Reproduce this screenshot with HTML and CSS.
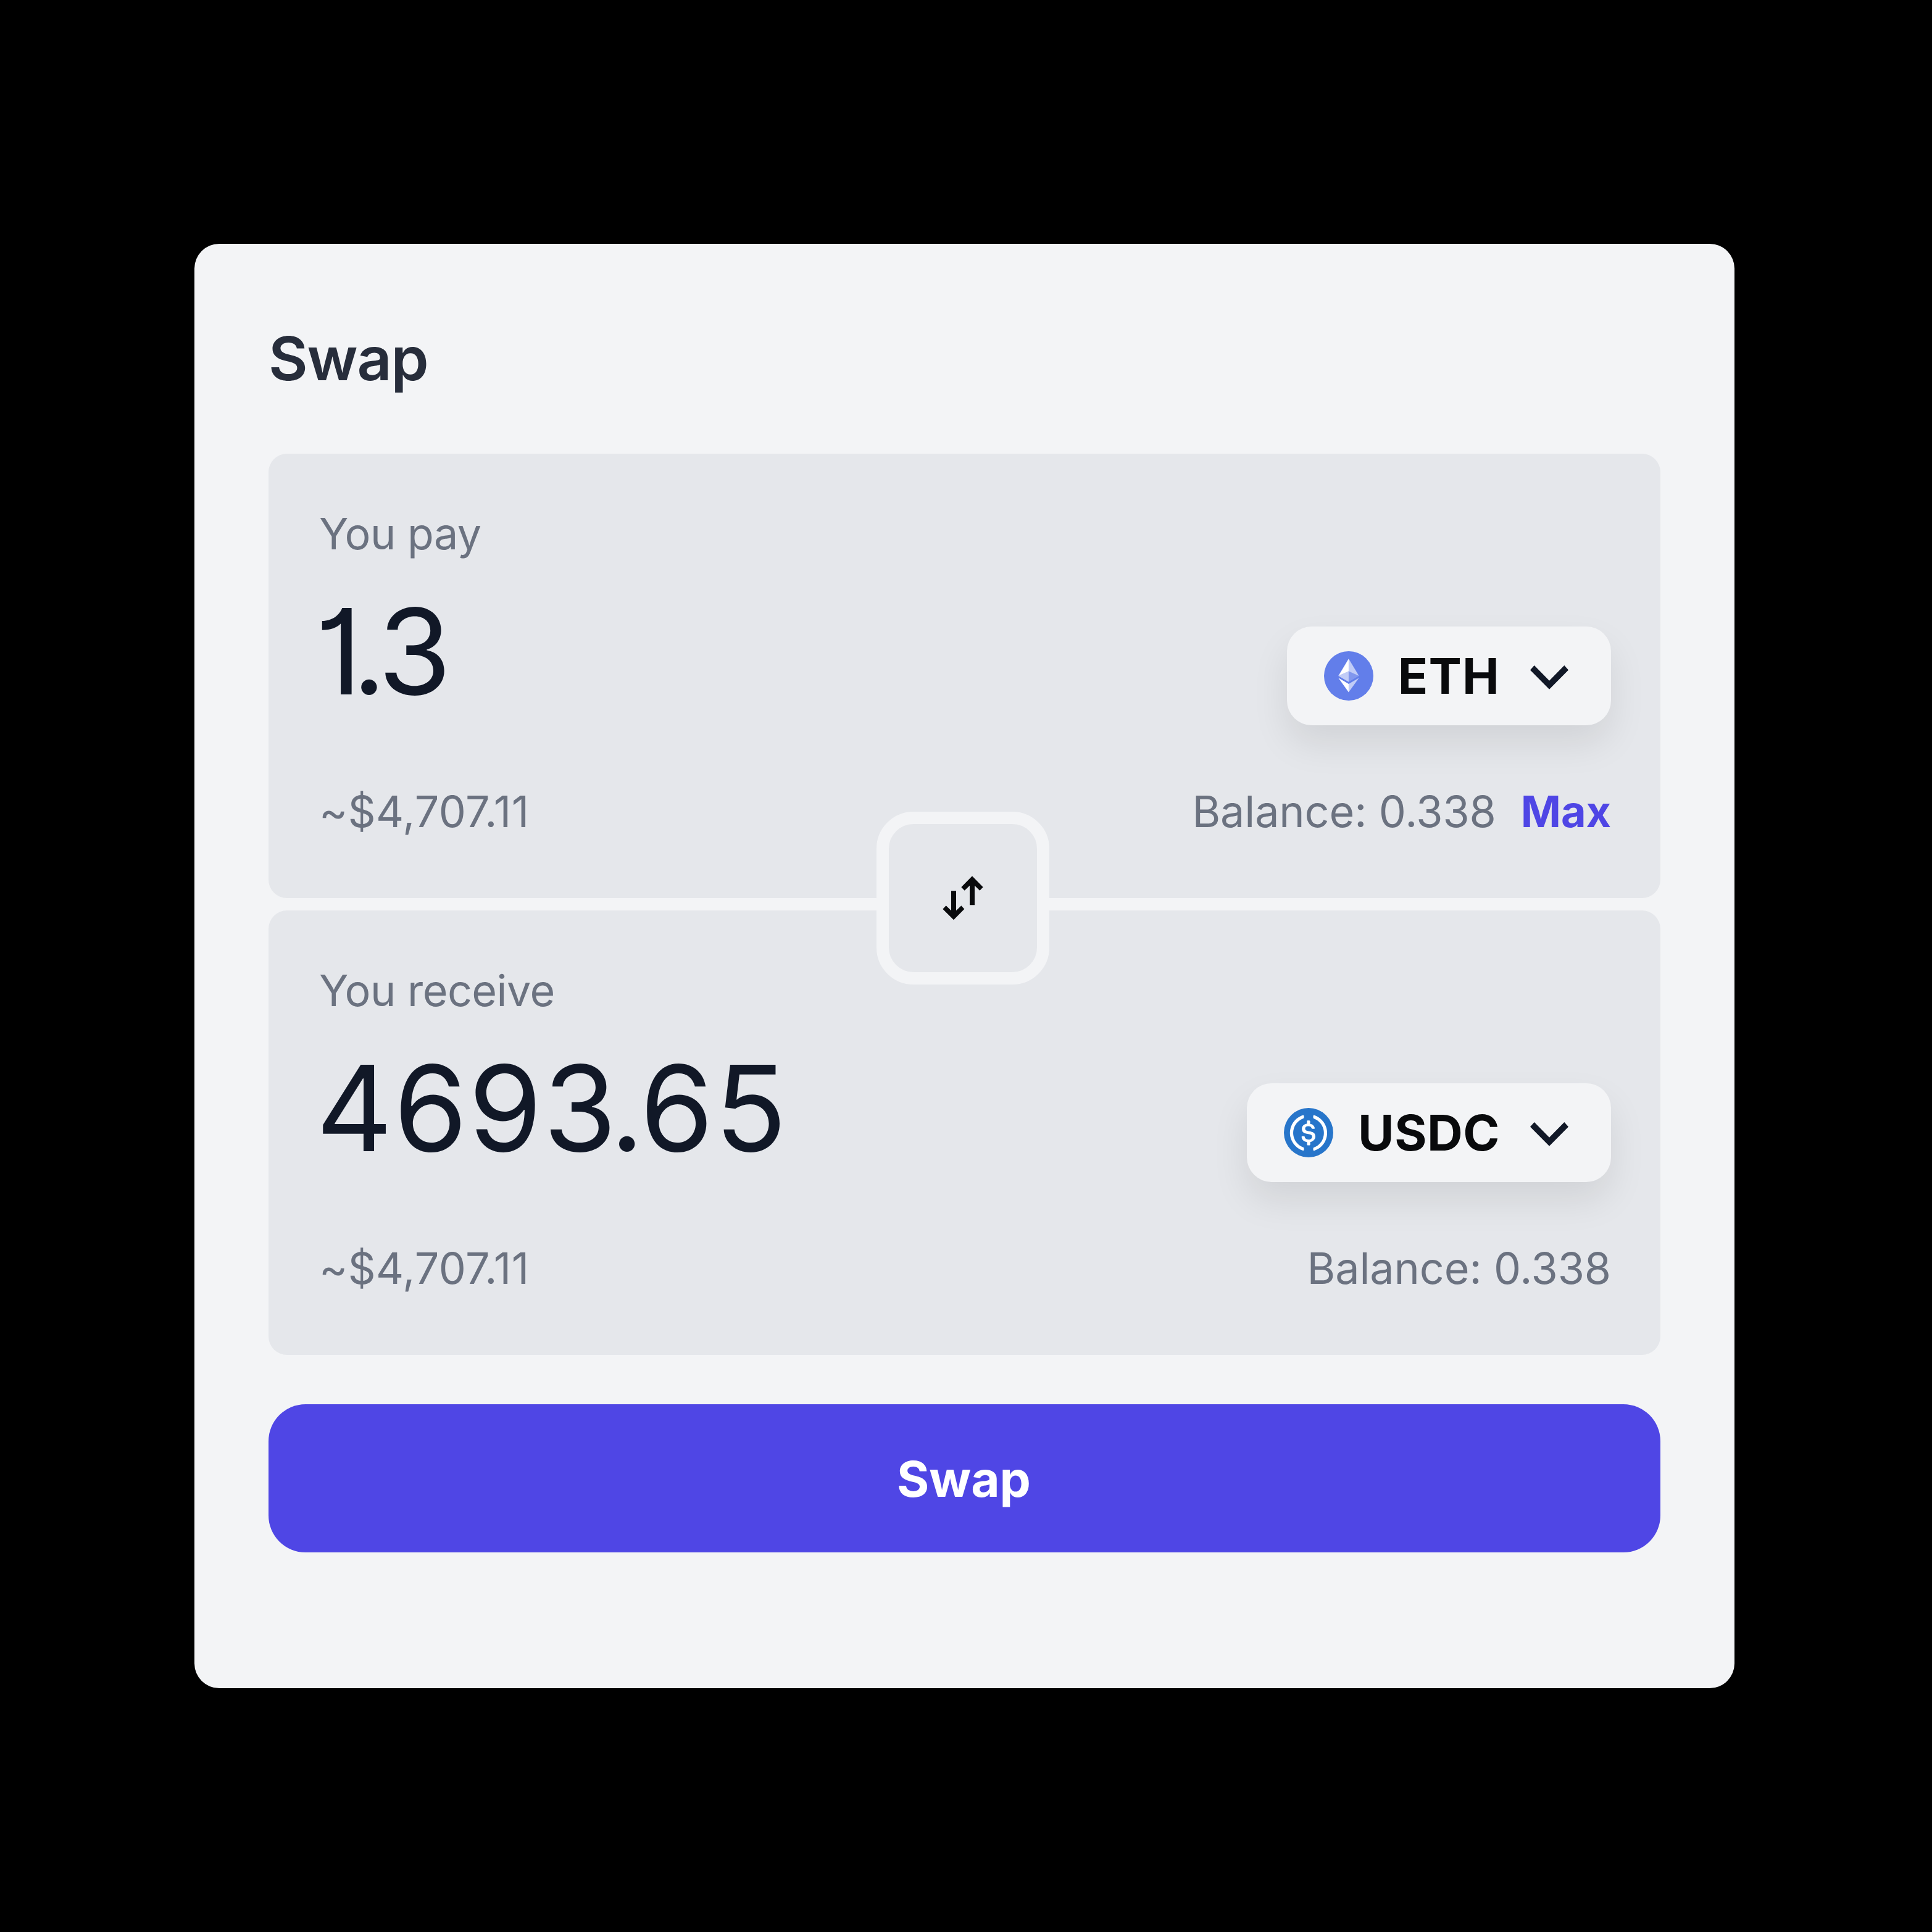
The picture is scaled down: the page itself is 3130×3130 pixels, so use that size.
FILE: index.html
```html
<!DOCTYPE html>
<html lang="en">
<head>
<meta charset="utf-8">
<title>Swap</title>
<link rel="stylesheet" href="styles.css">
</head>
<body>
<main class="card">
  <h1 class="title">Swap</h1>
  <div class="panels">
    <section class="panel">
      <div class="label">You pay</div>
      <div class="main-row">
        <div class="amount amount-short">1.3</div>
        <button class="token token-eth">
          <svg class="icon" viewBox="0 0 32 32">
            <circle cx="16" cy="16" r="16" fill="#627eea"/>
            <g fill="#fff" transform="translate(1.3 1.31) scale(.89 .905)">
              <path fill-opacity=".602" d="M16.498 4v8.87l7.497 3.35z"/>
              <path d="M16.498 4L9 16.22l7.498-3.35z"/>
              <path fill-opacity=".602" d="M16.498 21.968v6.027L24 17.616z"/>
              <path d="M16.498 27.995v-6.028L9 17.616z"/>
              <path fill-opacity=".2" d="M16.498 20.573l7.497-4.353-7.497-3.348z"/>
              <path fill-opacity=".602" d="M9 16.22l7.498 4.353v-7.701z"/>
            </g>
          </svg>
          <span class="symbol">ETH</span>
          <svg class="icon" viewBox="0 0 80 80"><path fill="#111827" d="M9 30.5L15.7 23 40 47.7 64.3 23 71 30.5 40 61.7z"/></svg>
        </button>
      </div>
      <div class="foot-row">
        <span class="fiat">~$4,707.11</span>
        <span class="balance">Balance: 0.338<a class="max">Max</a></span>
      </div>
    </section>
    <section class="panel">
      <div class="label">You receive</div>
      <div class="main-row">
        <div class="amount">469<span class="point">3.</span>65</div>
        <button class="token">
          <svg class="icon" viewBox="0 0 2000 2000">
            <circle cx="1000" cy="1000" r="1000" fill="#2775ca"/>
            <path fill="#fff" d="M1275 1158.33c0-145.83-87.5-195.83-262.5-216.66-125-16.67-150-50-150-108.34s41.67-95.83 125-95.83c75 0 116.67 25 137.5 87.5 4.17 12.5 16.67 20.83 29.17 20.83h66.66c16.67 0 29.17-12.5 29.17-29.16v-4.17c-16.67-91.67-91.67-162.5-187.5-170.83v-100c0-16.67-12.5-29.17-33.33-33.34h-62.5c-16.67 0-29.17 12.5-33.34 33.34v95.83c-125 16.67-204.16 100-204.16 204.17 0 137.5 83.33 191.66 258.33 212.5 116.67 20.83 154.17 45.83 154.17 112.5s-58.34 112.5-137.5 112.5c-108.34 0-145.84-45.84-158.34-108.34-4.16-16.66-16.66-25-29.16-25h-70.84c-16.66 0-29.16 12.5-29.16 29.17v4.17c16.66 104.16 83.33 179.16 220.83 200v100c0 16.66 12.5 29.16 33.33 33.33h62.5c16.67 0 29.17-12.5 33.34-33.33v-100c125-20.84 208.33-108.34 208.33-220.84z"/>
            <path fill="#fff" d="M787.5 1595.83c-325-116.66-491.67-479.16-370.83-800 62.5-175 200-308.33 370.83-370.83 16.67-8.33 25-20.83 25-41.67V325c0-16.67-8.33-29.17-25-33.33-4.17 0-12.5 0-16.67 4.16-395.83 125-612.5 545.84-487.5 941.67 75 233.33 254.17 412.5 487.5 487.5 16.67 8.33 33.34 0 37.5-16.67 4.17-4.16 4.17-8.33 4.17-16.66v-58.34c0-12.5-12.5-29.16-25-37.5zM1229.17 295.83c-16.67-8.33-33.34 0-37.5 16.67-4.17 4.17-4.17 8.33-4.17 16.67v58.33c0 16.67 12.5 33.33 25 41.67 325 116.66 491.67 479.16 370.83 800-62.5 175-200 308.33-370.83 370.83-16.67 8.33-25 20.83-25 41.67V1700c0 16.67 8.33 29.17 25 33.33 4.17 0 12.5 0 16.67-4.16 395.83-125 612.5-545.84 487.5-941.67-75-237.5-258.34-416.67-487.5-491.67z"/>
          </svg>
          <span class="symbol">USDC</span>
          <svg class="icon" viewBox="0 0 80 80"><path fill="#111827" d="M9 30.5L15.7 23 40 47.7 64.3 23 71 30.5 40 61.7z"/></svg>
        </button>
      </div>
      <div class="foot-row">
        <span class="fiat">~$4,707.11</span>
        <span class="balance">Balance: 0.338</span>
      </div>
    </section>
    <button class="flip" aria-label="Switch tokens">
      <svg class="icon" viewBox="0 0 240 240" fill="#090a0c">
        <path d="M63 85H87V181L112 157 127 173 75 226 22 173 38 157 63 181z"/>
        <path d="M165 13L218 67 202 83 177 59V154H153V59L128 83 112 67z"/>
      </svg>
    </button>
  </div>
  <button class="submit">Swap</button>
</main>
</body>
</html>
```

FILE: styles.css
```css
* {
  box-sizing: border-box;
}

body {
  margin: 0;
  height: 3130px;
  padding: 395px 0 0 315px;
  background: #000;
  font-family: Inter, "Liberation Sans", sans-serif;
}

button {
  border: 0;
  padding: 0;
  font-family: inherit;
}

.card {
  width: 2495px;
  height: 2340px;
  padding: 120px;
  border-radius: 40px;
  background: #f3f4f6;
}

.title {
  margin: 0;
  height: 220px;
  font-size: 98px;
  font-weight: 640;
  line-height: 132px;
  letter-spacing: -1.2px;
  color: #272d3b;
}

.panels {
  position: relative;
  display: flex;
  flex-direction: column;
  gap: 20px;
}

.panel {
  height: 720px;
  padding: 80px 80px 90px;
  border-radius: 30px;
  background: #e5e7eb;
  font-size: 70px;
  line-height: 100px;
  color: #6b7280;
}

.label {
  padding-left: 2px;
  letter-spacing: -.55px;
}

.main-row {
  display: flex;
  justify-content: space-between;
  align-items: flex-start;
  height: 350px;
}

.amount {
  margin-left: -3px;
  font-size: 192px;
  line-height: 280px;
  letter-spacing: 2px;
  color: #111827;
}

.amount-short {
  margin-left: -5px;
  font-feature-settings: "cv01";
  letter-spacing: -8px;
}

.point {
  letter-spacing: -6.5px;
}

.token {
  display: flex;
  align-items: center;
  gap: 40px;
  height: 160px;
  margin-top: 100px;
  padding: 0 60px;
  border-radius: 40px;
  background: #f3f4f6;
  box-shadow: 0 30px 60px rgba(4, 8, 14, .085);
}

.icon {
  display: block;
  width: 80px;
  height: 80px;
}

.symbol {
  font-size: 80px;
  font-weight: 700;
  line-height: 120px;
  letter-spacing: .5px;
  color: #090a0c;
}

.token-eth .symbol {
  letter-spacing: 1.2px;
}

.foot-row {
  display: flex;
  justify-content: space-between;
}

.fiat {
  padding-left: 2px;
  letter-spacing: .4px;
}

.balance {
  letter-spacing: -.1px;
}

.max {
  margin-left: 40px;
  font-weight: 700;
  color: #4f46e5;
}

.flip {
  position: absolute;
  top: 580px;
  left: 985px;
  display: flex;
  align-items: center;
  justify-content: center;
  width: 280px;
  height: 280px;
  border: 20px solid #f3f4f6;
  border-radius: 60px;
  background: #e5e7eb;
}

.submit {
  display: block;
  width: 100%;
  height: 240px;
  margin-top: 80px;
  padding-right: 2px;
  border-radius: 60px;
  background: #4f46e5;
  font-size: 80px;
  font-weight: 700;
  color: #fff;
}
```
